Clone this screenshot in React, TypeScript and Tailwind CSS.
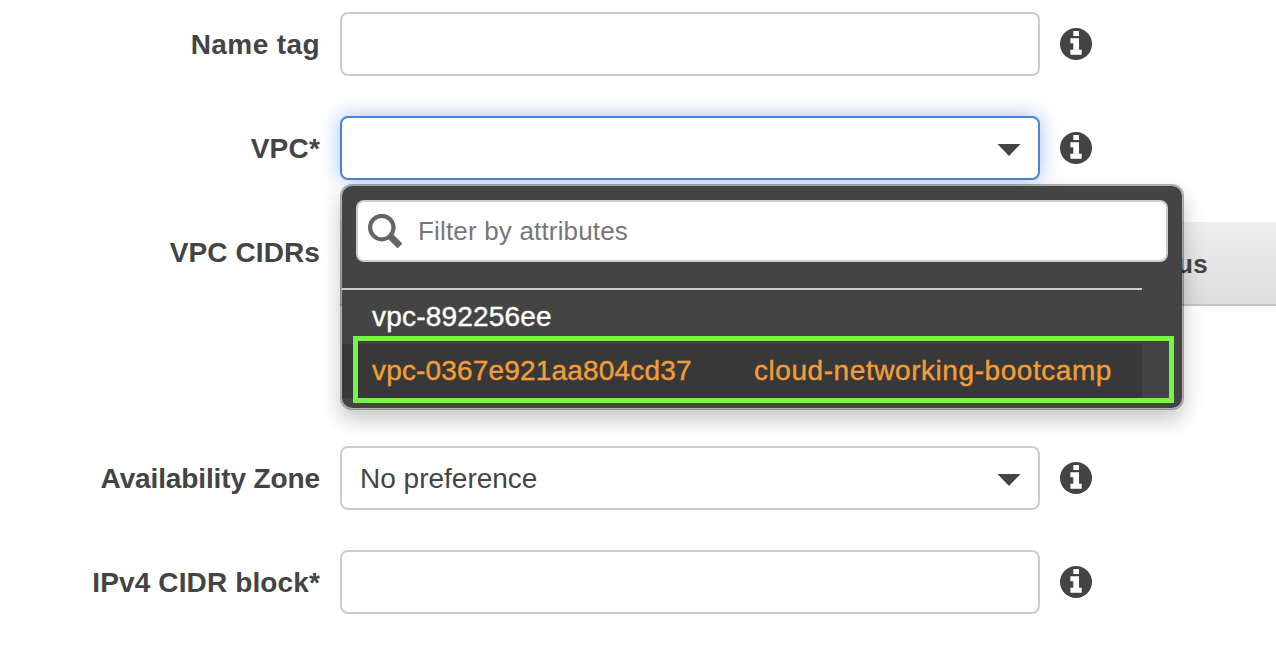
import type { ReactNode } from "react";

function InfoIcon() {
  return (
    <svg className="ml-5 size-8 shrink-0" viewBox="0 0 32 32" aria-hidden="true">
      <circle cx="16" cy="16" r="16" fill="#444" />
      <path
        fill="#fff"
        d="M13.3 3.1H19v4.8h-5.7z M10.4 10.2H19v11.5h2.7v5.1H10.4v-5.1h2.9v-6.4h-2.9z"
      />
    </svg>
  );
}

function Caret() {
  return (
    <svg className="mt-1 h-3 w-6 shrink-0" viewBox="0 0 24 12" aria-hidden="true">
      <path d="M0.5 0h23L12 12z" fill="#444" />
    </svg>
  );
}

function SearchIcon() {
  return (
    <svg className="size-[34px] shrink-0" viewBox="0 0 34 34" fill="none" stroke="#666" aria-hidden="true">
      <circle cx="13.8" cy="13.6" r="11.7" strokeWidth="4.2" />
      <path d="M22 22L32 32" strokeWidth="6.8" />
    </svg>
  );
}

function Label({ children, spacing = "" }: { children: ReactNode; spacing?: string }) {
  return (
    <div className={`w-80 shrink-0 pt-0.5 text-right font-bold leading-8 whitespace-nowrap ${spacing}`}>
      {children}
    </div>
  );
}

function Field({ children, focused = false }: { children?: ReactNode; focused?: boolean }) {
  return (
    <div
      className={`ml-5 flex h-16 w-[700px] shrink-0 items-center justify-between rounded-lg border-2 bg-white pr-[17px] pl-[18px] ${
        focused ? "border-[#4884d8] shadow-[0_0_20px_rgba(72,132,216,0.5)]" : "border-[#ccc]"
      }`}
    >
      {children}
    </div>
  );
}

function VpcMenu() {
  return (
    <div className="absolute top-[184px] left-[340px] h-[226px] w-[844px] rounded-xl border-2 border-black/30 bg-[#444] bg-clip-padding pt-3.5 shadow-[0_10px_20px_rgba(0,0,0,0.22)]">
      <div className="mx-3.5 flex h-[62px] items-center rounded-lg border-2 border-[#ccc] bg-white pl-2.5 text-[26px] tracking-[0.17px] text-[#777]">
        <SearchIcon />
        <span className="ml-4">Filter by attributes</span>
      </div>
      <div className="mt-[26px] w-[800px] border-t-2 border-[#ccc] [-webkit-text-stroke:0.4px_currentColor]">
        <div className="flex h-[54px] items-center pl-[30px] tracking-[0.2px] text-white">
          <span>vpc-892256ee</span>
        </div>
        <div className="flex h-[54px] items-center bg-[#383838] pl-[30px] text-[#f29d38]">
          <span className="w-[382px] tracking-[0.17px]">vpc-0367e921aa804cd37</span>
          <span className="tracking-[0.56px]">cloud-networking-bootcamp</span>
        </div>
      </div>
      <div className="absolute top-[150px] left-[11px] h-[67px] w-[821px] border-5 border-[#75f44b]" />
    </div>
  );
}

export default function App() {
  return (
    <main className="relative h-[652px] w-[1276px] overflow-hidden bg-white pt-3 font-['Liberation_Sans',Arial,sans-serif] text-[28px] text-[#444]">
      <div className="flex items-center">
        <Label spacing="tracking-[0.4px]">Name tag</Label>
        <Field />
        <InfoIcon />
      </div>
      <div className="mt-10 flex items-center">
        <Label spacing="tracking-[0.2px]">VPC*</Label>
        <Field focused>
          <span />
          <Caret />
        </Field>
        <InfoIcon />
      </div>
      <div className="mt-[42px] flex h-[84px] items-start">
        <div className="pt-[13px]">
          <Label spacing="tracking-[0.1px]">VPC CIDRs</Label>
        </div>
        <div className="ml-5 flex h-[84px] grow items-center justify-end border-b-2 border-[#c4c4c4] bg-linear-to-b from-[#eee] to-[#ddd] pt-0.5 pr-[68px] text-[26px] font-bold tracking-[0.3px]">
          Status
        </div>
      </div>
      <div className="mt-[140px] flex items-center">
        <Label spacing="tracking-[-0.12px]">Availability Zone</Label>
        <Field>
          <span className="pt-0.5">No preference</span>
          <Caret />
        </Field>
        <InfoIcon />
      </div>
      <div className="mt-10 flex items-center">
        <Label spacing="tracking-[0.13px]">IPv4 CIDR block*</Label>
        <Field />
        <InfoIcon />
      </div>
      <VpcMenu />
    </main>
  );
}
